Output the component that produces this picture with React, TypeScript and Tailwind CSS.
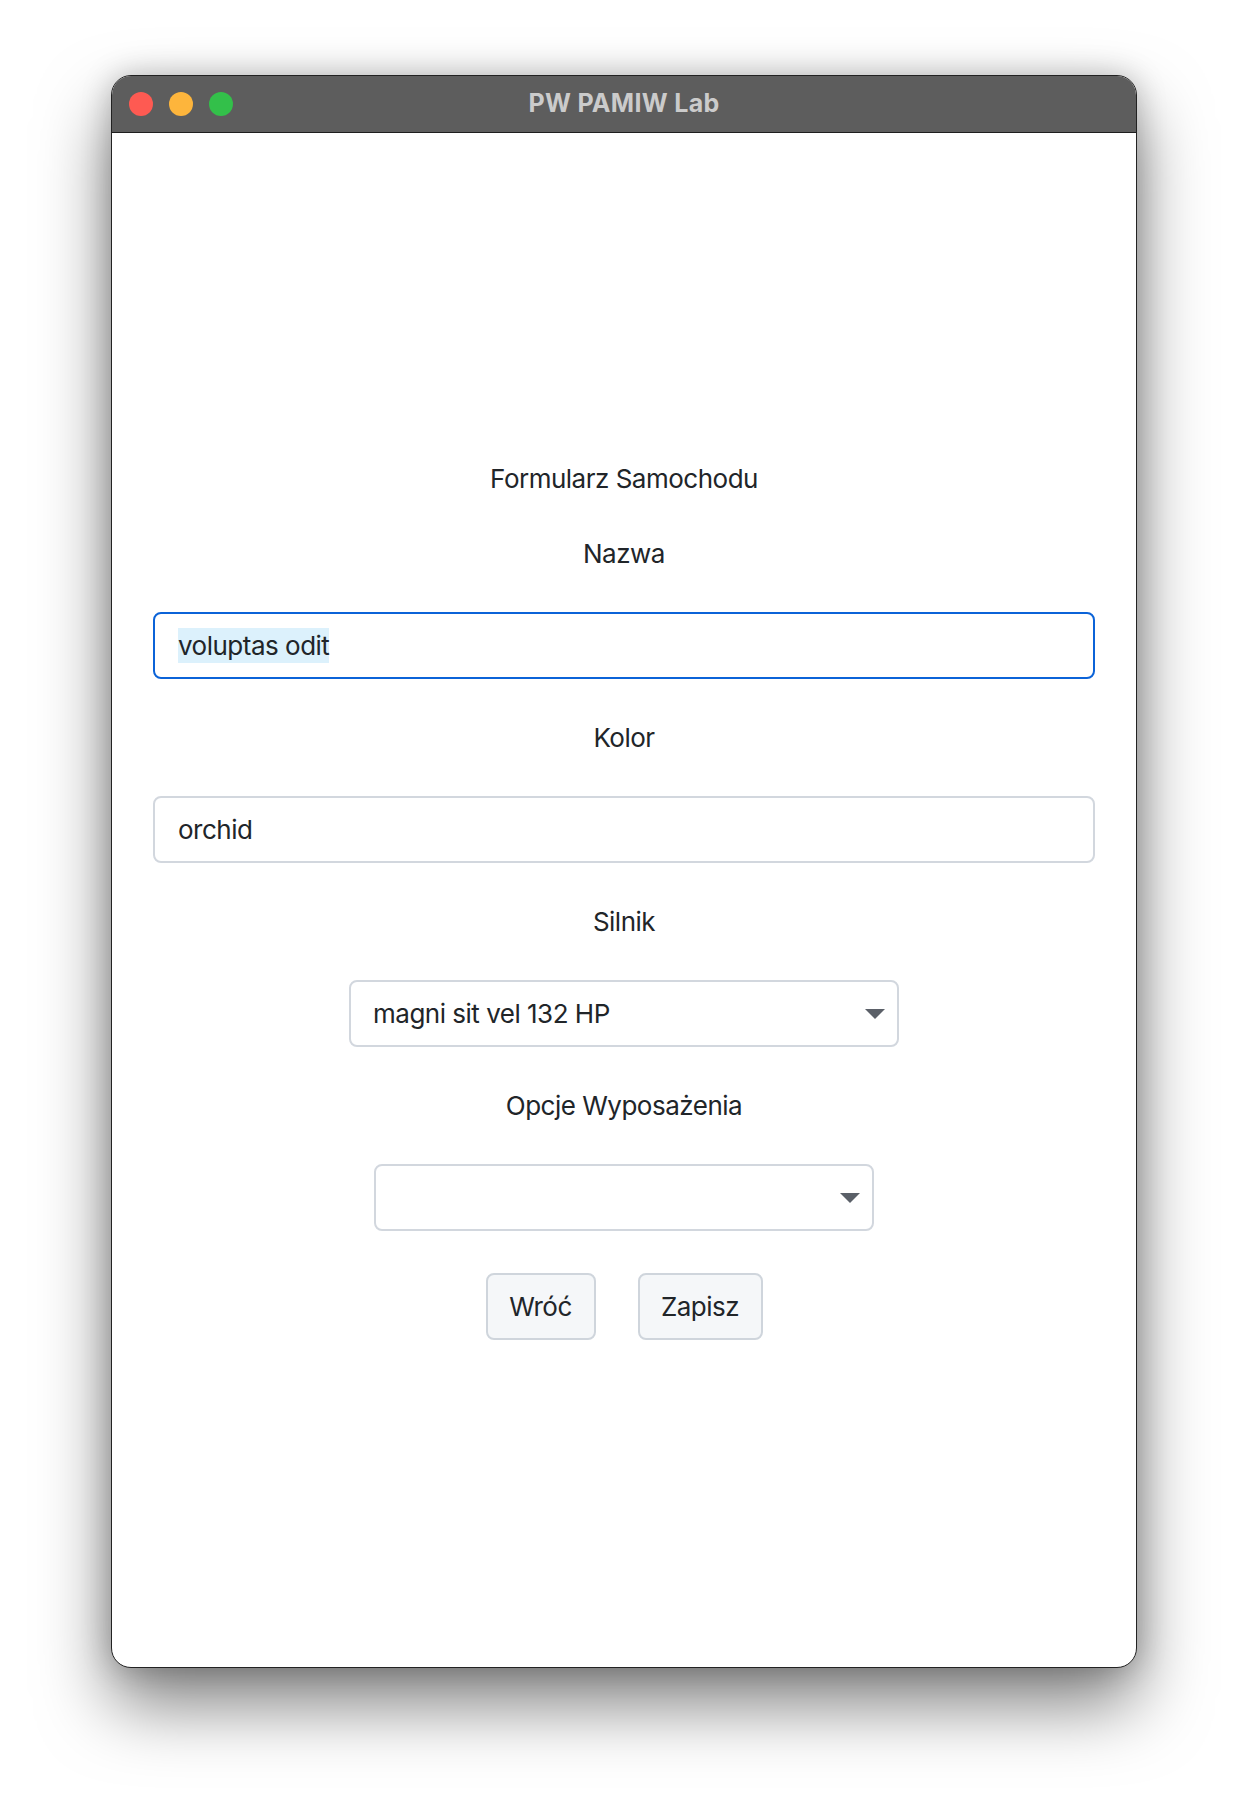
import React from 'react';

const font = { fontFamily: 'Inter, "Noto Sans", sans-serif' };

const Caret: React.FC = () => (
  <svg width="20" height="10" viewBox="0 0 20 10" className="shrink-0">
    <path d="M0 0 L20 0 L10 10 Z" fill="#5b6068" />
  </svg>
);

const Label: React.FC<{ children: React.ReactNode; className?: string }> = ({ children, className }) => (
  <div className={`h-[36px] leading-[36px] text-[26px] tracking-[-0.5px] text-[#212529] text-center ${className ?? ''}`}>
    {children}
  </div>
);

const TextBox: React.FC<{ value: string; focused?: boolean; className?: string }> = ({ value, focused, className }) => (
  <div
    className={`h-[67px] w-full rounded-[8px] border-2 bg-white flex items-center pl-[23px] ${
      focused ? 'border-[#0b63d8]' : 'border-[#d2d7de]'
    } ${className ?? ''}`}
  >
    <span
      className={`h-[35px] leading-[35px] text-[26px] tracking-[-0.5px] text-[#212529] ${focused ? 'bg-[#dcf1fc]' : ''}`}
    >
      {value}
    </span>
  </div>
);

const SelectBox: React.FC<{ value: string; width: string; className?: string }> = ({ value, width, className }) => (
  <div
    className={`h-[67px] ${width} rounded-[8px] border-2 border-[#d2d7de] bg-white flex items-center justify-between pl-[22px] pr-[12px] ${className ?? ''}`}
  >
    <span className="text-[26px] leading-[35px] tracking-[-0.5px] text-[#212529]">{value}</span>
    <Caret />
  </div>
);

const Button: React.FC<{ children: React.ReactNode; width: string }> = ({ children, width }) => (
  <button
    className={`h-[67px] ${width} rounded-[8px] border-2 border-[#cfd5dc] bg-[#f5f7f9] text-[26px] tracking-[-0.5px] text-[#212529] flex items-center justify-center`}
  >
    {children}
  </button>
);

export default function App() {
  return (
    <div className="w-full h-[1816px] bg-white pt-[75px] flex justify-center" style={font}>
      <div className="w-[1026px] h-[1593px] rounded-[20px] border border-[#222] bg-white overflow-hidden flex flex-col shadow-[0_36px_70px_rgba(0,0,0,0.5),0_0_30px_rgba(0,0,0,0.22)]">
        {/* title bar */}
        <div className="relative h-[57px] shrink-0 bg-[#5d5d5d] border-b border-[#1e1e1e] flex items-center justify-center">
          <div className="absolute left-[17px] top-[16px] flex gap-[16px]">
            <span className="w-[24px] h-[24px] rounded-full bg-[#fe5a52]" />
            <span className="w-[24px] h-[24px] rounded-full bg-[#fdb53c]" />
            <span className="w-[24px] h-[24px] rounded-full bg-[#33c04a]" />
          </div>
          <span className="text-[25px] font-bold text-[#cbcbcb] tracking-[0.3px]">PW PAMIW Lab</span>
        </div>

        {/* form */}
        <div className="flex-1 flex flex-col items-center px-[41px] pt-[328px]">
          <Label>Formularz Samochodu</Label>

          <Label className="mt-[39px]">Nazwa</Label>
          <TextBox value="voluptas odit" focused className="mt-[40px]" />

          <Label className="mt-[41px]">Kolor</Label>
          <TextBox value="orchid" className="mt-[40px]" />

          <Label className="mt-[41px]">Silnik</Label>
          <SelectBox value="magni sit vel 132 HP" width="w-[550px]" className="mt-[40px]" />

          <Label className="mt-[41px]">Opcje Wyposażenia</Label>
          <SelectBox value="" width="w-[500px]" className="mt-[40px]" />

          <div className="mt-[42px] flex gap-[42px]">
            <Button width="w-[110px]">Wróć</Button>
            <Button width="w-[125px]">Zapisz</Button>
          </div>
        </div>
      </div>
    </div>
  );
}
